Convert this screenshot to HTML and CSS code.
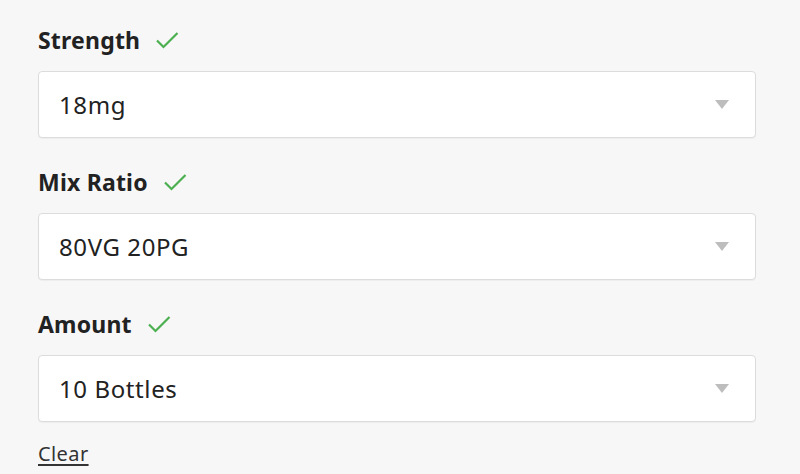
FILE: index.html
```html
<!DOCTYPE html>
<html>
<head>
<meta charset="utf-8">
<link rel="stylesheet" href="styles.css">
</head>
<body>
<div class="form">
  <div class="field">
    <div class="label">Strength <svg class="check" viewBox="0 0 24 18" width="24" height="18"><path d="M2 9.5 L8.5 16 L22.5 2" fill="none" stroke="#4caf50" stroke-width="2.2"/></svg></div>
    <div class="select"><span>18mg</span><span class="arrow"></span></div>
  </div>
  <div class="field">
    <div class="label">Mix Ratio <svg class="check" viewBox="0 0 24 18" width="24" height="18"><path d="M2 9.5 L8.5 16 L22.5 2" fill="none" stroke="#4caf50" stroke-width="2.2"/></svg></div>
    <div class="select"><span>80VG 20PG</span><span class="arrow"></span></div>
  </div>
  <div class="field">
    <div class="label">Amount <svg class="check" viewBox="0 0 24 18" width="24" height="18"><path d="M2 9.5 L8.5 16 L22.5 2" fill="none" stroke="#4caf50" stroke-width="2.2"/></svg></div>
    <div class="select"><span>10 Bottles</span><span class="arrow"></span></div>
  </div>
  <a class="clear" href="#">Clear</a>
</div>
</body>
</html>
```
FILE: styles.css
```css
html, body {
  margin: 0;
  background: #f7f7f7;
}
body {
  font-family: "Noto Sans", "Open Sans", sans-serif;
  color: #222;
}
.form {
  width: 718px;
  padding: 25px 0 0 38px;
  display: flex;
  flex-direction: column;
}
.field {
  display: flex;
  flex-direction: column;
  gap: 16px;
  margin-bottom: 29px;
}
.field:last-of-type {
  margin-bottom: 20px;
}
.label {
  font-weight: 700;
  font-size: 23px;
  line-height: 30px;
  height: 30px;
  display: flex;
  align-items: center;
  gap: 15px;
  color: #222;
  letter-spacing: 0.2px;
}
.check {
  display: block;
  margin-top: -1px;
}
.select {
  box-sizing: border-box;
  height: 67px;
  background: #fff;
  border: 1px solid #dcdcdc;
  border-radius: 4px;
  box-shadow: 0 1px 1px rgba(0,0,0,0.04);
  display: flex;
  align-items: center;
  justify-content: space-between;
  padding: 0 26px 0 20px;
  font-size: 24px;
  letter-spacing: 0.6px;
  color: #222;
}
.arrow {
  width: 0;
  height: 0;
  border-left: 7px solid transparent;
  border-right: 7px solid transparent;
  border-top: 9px solid #bdbdbd;
}
.clear {
  font-size: 20px;
  line-height: 24px;
  letter-spacing: 0.4px;
  color: #333;
  text-decoration: underline;
  text-underline-offset: 3px;
  align-self: flex-start;
}
```
